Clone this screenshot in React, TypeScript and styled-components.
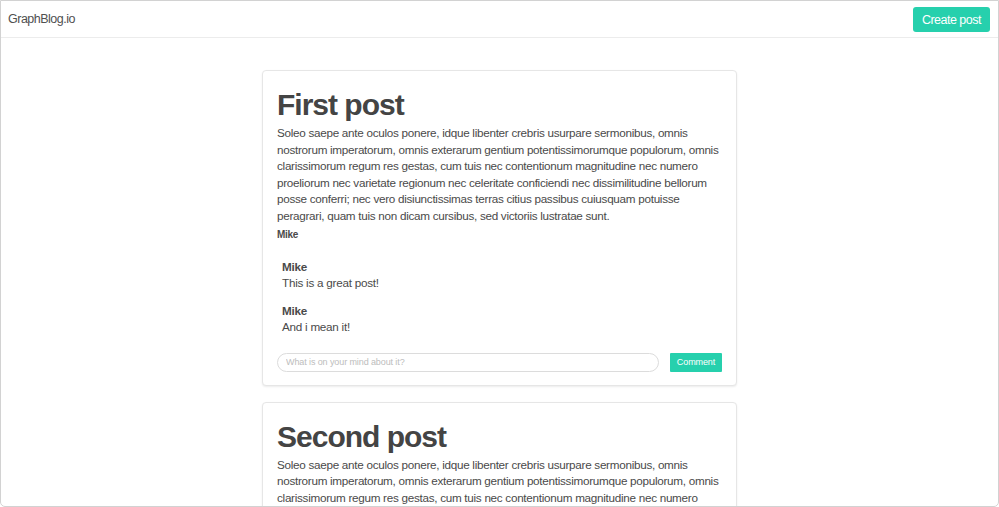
import styled, { createGlobalStyle } from 'styled-components';

type Comment = { author: string; text: string };
type Post = { title: string; body: string; author: string; comments: Comment[] };

const LOREM =
  'Soleo saepe ante oculos ponere, idque libenter crebris usurpare sermonibus, omnis nostrorum imperatorum, omnis exterarum gentium potentissimorumque populorum, omnis clarissimorum regum res gestas, cum tuis nec contentionum magnitudine nec numero proeliorum nec varietate regionum nec celeritate conficiendi nec dissimilitudine bellorum posse conferri; nec vero disiunctissimas terras citius passibus cuiusquam potuisse peragrari, quam tuis non dicam cursibus, sed victoriis lustratae sunt.';

const POSTS: Post[] = [
  {
    title: 'First post',
    body: LOREM,
    author: 'Mike',
    comments: [
      { author: 'Mike', text: 'This is a great post!' },
      { author: 'Mike', text: 'And i mean it!' },
    ],
  },
  {
    title: 'Second post',
    body: LOREM,
    author: 'Mike',
    comments: [],
  },
];

const GlobalStyle = createGlobalStyle`
  html, body {
    margin: 0;
    padding: 0;
    background: #fff;
    font-family: "Liberation Sans", Arial, sans-serif;
    color: #4a4a4a;
  }
  * { box-sizing: border-box; }
`;

export default function App() {
  return (
    <>
      <GlobalStyle />
      <Frame>
        <Header>
          <Brand>GraphBlog.io</Brand>
          <PrimaryButton>Create post</PrimaryButton>
        </Header>
        <Feed>
          {POSTS.map((post, i) => (
            <PostCard key={i}>
              <Title>{post.title}</Title>
              <Body>{post.body}</Body>
              <Author>{post.author}</Author>
              {post.comments.length > 0 && (
                <CommentList>
                  {post.comments.map((c, j) => (
                    <CommentItem key={j}>
                      <CommentAuthor>{c.author}</CommentAuthor>
                      <CommentText>{c.text}</CommentText>
                    </CommentItem>
                  ))}
                </CommentList>
              )}
              <CommentForm>
                <CommentInput placeholder="What is on your mind about it?" />
                <SmallButton>Comment</SmallButton>
              </CommentForm>
            </PostCard>
          ))}
        </Feed>
      </Frame>
    </>
  );
}

const Frame = styled.div`
  height: 100vh;
  border: 1px solid #d2d2d2;
  border-radius: 0 0 5px 5px;
  overflow: hidden;
  display: flex;
  flex-direction: column;
`;
const Header = styled.header`
  height: 37px;
  flex-shrink: 0;
  display: flex;
  align-items: center;
  justify-content: space-between;
  padding: 0 8px 0 7px;
  border-bottom: 1px solid #ececec;
`;
const Brand = styled.div`
  font-size: 12.5px;
  letter-spacing: -0.5px;
  color: #505050;
`;
const PrimaryButton = styled.button`
  height: 25px;
  padding: 0 9px;
  margin-top: 1px;
  border: none;
  border-radius: 3px;
  background: #26d0ad;
  color: #fff;
  font-family: inherit;
  font-size: 12.5px;
  letter-spacing: -0.5px;
`;
const Feed = styled.main`
  width: 475px;
  margin: 32px auto 0;
  display: flex;
  flex-direction: column;
  gap: 16px;
`;
const PostCard = styled.article`
  border: 1px solid #e6e6e6;
  border-radius: 4px;
  box-shadow: 0 1px 2px rgba(0, 0, 0, 0.08);
  padding: 16px 14px 13px;
  background: #fff;
`;
const Title = styled.h1`
  margin: 0 0 2px;
  font-size: 30px;
  line-height: 36px;
  letter-spacing: -1px;
  font-weight: 700;
  color: #444;
`;
const Body = styled.p`
  margin: 0;
  font-size: 11.7px;
  line-height: 16.6px;
  letter-spacing: -0.28px;
`;
const Author = styled.div`
  font-size: 10px;
  letter-spacing: -0.3px;
  font-weight: 700;
  line-height: 20px;
`;
const CommentList = styled.div`
  display: flex;
  flex-direction: column;
  gap: 11px;
  padding: 14px 0 0 5px;
`;
const CommentItem = styled.div`
  display: flex;
  flex-direction: column;
`;
const CommentAuthor = styled.div`
  font-size: 11.7px;
  letter-spacing: -0.25px;
  font-weight: 700;
  line-height: 16.5px;
`;
const CommentText = styled.div`
  font-size: 11.7px;
  letter-spacing: -0.25px;
  line-height: 16.5px;
`;
const CommentForm = styled.div`
  display: flex;
  align-items: center;
  gap: 11px;
  margin-top: 17px;
`;
const CommentInput = styled.input`
  flex: 1;
  height: 19px;
  border: 1px solid #dcdcdc;
  border-radius: 10px;
  padding: 0 8px;
  font-family: inherit;
  font-size: 9px;
  letter-spacing: -0.1px;
  color: #4a4a4a;
  outline: none;
  &::placeholder {
    color: #bdbdbd;
  }
`;
const SmallButton = styled.button`
  height: 19px;
  width: 52px;
  border: none;
  border-radius: 1px;
  background: #26d0ad;
  color: #fff;
  font-family: inherit;
  font-size: 9px;
  letter-spacing: -0.1px;
  padding: 0;
`;
